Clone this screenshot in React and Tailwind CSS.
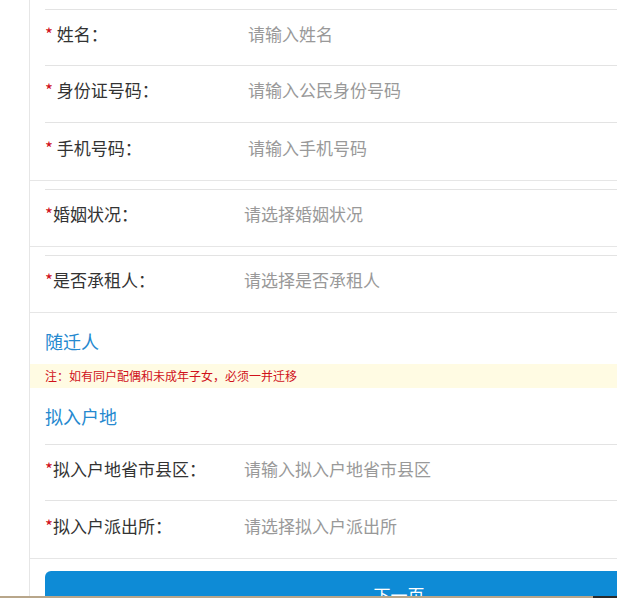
const font = { fontFamily: '"Noto Sans CJK SC", "Noto Sans", sans-serif' };

function Row({ label, placeholder, spaced, full, first }) {
  return (
    <div
      className={
        'flex items-center h-[57px] pb-[8px] text-[17px] ' +
        (first ? 'border-t border-[#e3e3e3] ' : '') +
        (full ? '' : 'border-b border-[#e3e3e3]')
      }
    >
      <div className={spaced ? 'w-[203px] text-[#333]' : 'w-[199px] text-[#333]'}>
        <span className="text-[#d0111b]">{spaced ? '* ' : '*'}</span>
        {label}
      </div>
      <div className="text-[#999]">{placeholder}</div>
    </div>
  );
}

function Group({ children, topGap }) {
  return (
    <div className={'border-b border-[#e6e6e6] ' + topGap}>
      <div className="ml-[15px]">{children}</div>
    </div>
  );
}

export default function App() {
  return (
    <div className="w-[617px] h-[598px] overflow-hidden bg-white flex flex-col" style={font}>
      <div className="flex flex-1 min-h-0">
        <div className="w-[30px] shrink-0 border-r border-[#e6e6e6]" />
        <div className="w-[771px] shrink-0">
          <Group topGap="pt-[9px]">
            <Row first spaced label="姓名：" placeholder="请输入姓名" />
            <Row spaced label="身份证号码：" placeholder="请输入公民身份号码" />
            <Row spaced full label="手机号码：" placeholder="请输入手机号码" />
          </Group>
          <Group topGap="pt-[8px]">
            <Row first full label="婚姻状况：" placeholder="请选择婚姻状况" />
          </Group>
          <Group topGap="pt-[8px]">
            <Row first full label="是否承租人：" placeholder="请选择是否承租人" />
          </Group>
          <div className="h-[51px] pl-[15px] pt-[5px] flex items-center text-[18px] text-[#2589cf]">随迁人</div>
          <div className="h-[24px] bg-[#fffbe3] pl-[15px] flex items-center text-[12px] text-[#d0111b]">
            注：如有同户配偶和未成年子女，必须一并迁移
          </div>
          <div className="h-[56px] pl-[15px] flex items-center text-[18px] text-[#2589cf]">拟入户地</div>
          <Group topGap="">
            <Row first label="拟入户地省市县区：" placeholder="请输入拟入户地省市县区" />
            <Row full label="拟入户派出所：" placeholder="请选择拟入户派出所" />
          </Group>
          <div className="pt-[12px] pl-[15px]">
            <div className="w-[708px] h-[40px] rounded-t-[6px] bg-[#0e8bd6] flex justify-center pt-[11px] text-[17px] text-white">
              下一页
            </div>
          </div>
        </div>
      </div>
      <div className="h-[2px] flex shrink-0">
        <div className="w-[593px] bg-[#b8a68a]" />
        <div className="flex-1 bg-[#2a2a2a]" />
      </div>
    </div>
  );
}
